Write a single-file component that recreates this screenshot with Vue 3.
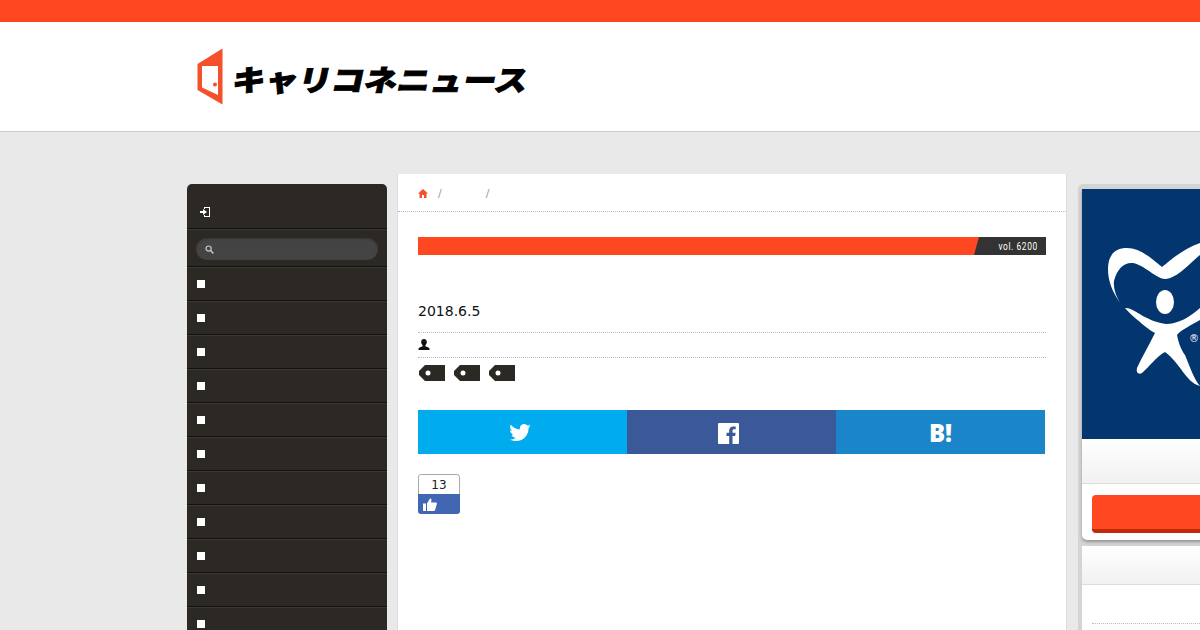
<template>
  <div class="page">
    <div class="top-bar"></div>

    <header class="site-header">
      <div class="logo">
        <svg class="logo-door" width="26" height="58" viewBox="0 0 26 58">
          <polygon points="25.5,0.5 25.5,56.5 0.5,42 0.5,16" fill="#f4512a" />
          <polygon points="5,18 21,18 21,47 5,39.5" fill="#fff" />
          <circle cx="18" cy="36.5" r="2" fill="#f4512a" />
        </svg>
        <span class="logo-text">キャリコネニュース</span>
      </div>
    </header>

    <div class="columns">
      <aside class="side-nav">
        <div class="nav-login">
          <svg width="11" height="12" viewBox="0 0 11 12">
            <path d="M4 1h6v10H4V9h1v1h4V2H5v1H4z" fill="#fff" />
            <path d="M0 5h3V3l4 3-4 3V7H0z" fill="#fff" />
          </svg>
        </div>
        <div class="nav-search">
          <div class="search-pill">
            <svg width="9" height="9" viewBox="0 0 9 9">
              <circle cx="3.6" cy="3.6" r="2.6" fill="none" stroke="#ccc" stroke-width="1.2" />
              <path d="M5.6 5.6L8.4 8.4" stroke="#ccc" stroke-width="1.4" />
            </svg>
          </div>
        </div>
        <div v-for="n in 11" :key="n" class="nav-item">
          <span class="nav-square"></span>
        </div>
      </aside>

      <main class="article">
        <div class="crumbs">
          <svg width="10" height="9" viewBox="0 0 10 9">
            <path d="M5 0l5 4.6H8.5V9H6V6H4v3H1.500V4.600H0z" fill="#f4512a" />
          </svg>
          <span class="crumb-sep first">/</span>
          <span class="crumb-sep second">/</span>
        </div>

        <div class="article-body">
          <div class="title-bar">
            <div class="vol"><span class="vol-text">vol. 6200</span></div>
          </div>

          <p class="date">2018.6.5</p>

          <div class="author">
            <svg width="12" height="12" viewBox="0 0 12 12">
              <path d="M6 0c1.800 0 2.800 1.300 2.800 3.100 0 1.300-.6 2.500-1.400 3.100v1c1.500.5 3.600 1.100 4.100 2.300v1.500H.5V9.500c.5-1.200 2.600-1.800 4.100-2.300v-1C3.800 5.600 3.200 4.400 3.200 3.100 3.200 1.300 4.200 0 6 0z" fill="#111" />
            </svg>
          </div>

          <div class="tags">
            <svg v-for="t in 3" :key="t" width="27" height="18" viewBox="0 0 27 18">
              <path d="M7 1h20v16H7L1 11V7z" fill="#2c2824" />
              <circle cx="10" cy="9" r="2.500" fill="#fff" />
            </svg>
          </div>

          <div class="share">
            <div class="share-btn twitter">
              <svg width="22" height="18" viewBox="0 0 24 20">
                <path d="M24 2.400c-.9.400-1.800.7-2.800.8 1-.6 1.800-1.600 2.200-2.700-1 .6-2 1-3.100 1.200C19.300.7 18 0 16.600 0c-2.700 0-4.900 2.200-4.900 4.900 0 .4 0 .8.100 1.100C7.700 5.800 4.100 3.900 1.700.9c-.4.700-.7 1.600-.7 2.500 0 1.700.9 3.200 2.200 4.100-.8 0-1.600-.2-2.200-.6v.1c0 2.400 1.700 4.400 3.900 4.800-.4.100-.8.200-1.300.2-.3 0-.6 0-.9-.1.600 2 2.400 3.400 4.600 3.400-1.700 1.300-3.800 2.100-6.100 2.100-.4 0-.8 0-1.200-.1C2.200 18.300 4.800 19 7.500 19c9.100 0 14-7.500 14-14v-.6c1-.7 1.800-1.600 2.500-2z" fill="#fff" />
              </svg>
            </div>
            <div class="share-btn facebook">
              <svg width="21" height="21" viewBox="0 0 21 21">
                <path d="M1 0h19a1 1 0 0 1 1 1v19a1 1 0 0 1-1 1h-5.500v-8h2.700l.4-3.200h-3.100v-2c0-.9.300-1.500 1.600-1.500h1.600V3.500c-.3 0-1.300-.1-2.400-.1-2.400 0-4.100 1.500-4.100 4.200v2.200H8.500V13h2.700v8H1a1 1 0 0 1-1-1V1a1 1 0 0 1 1-1z" fill="#fff" />
              </svg>
            </div>
            <div class="share-btn hatena">B!</div>
          </div>

          <div class="like">
            <div class="like-count">13</div>
            <div class="like-thumb">
              <svg width="14" height="13" viewBox="0 0 14 13">
                <path d="M0 5.500h3V13H0zM4 5.500L7 .5c1.200 0 1.800 1 1.400 2.300L8 4.500h4.800c.9 0 1.300.8 1 1.500l-1.700 6c-.2.600-.6 1-1.200 1H4z" fill="#fff" />
              </svg>
            </div>
          </div>
        </div>
      </main>

      <aside class="right-col">
        <section class="promo-card">
          <svg class="promo-art" width="300" height="250" viewBox="0 0 300 250">
            <rect width="300" height="250" fill="#03356f" />
            <path d="M38 114C30 102 26 92 26 80C26 66 33 59 45 59C56 59 66 66 80 78C88 72 100 60 118 54L118 66C110 72 95 90 83 90C75 90 62 76 51 74C42 73 35 80 32 92C31 99 34 107 38 114z" fill="#fff" />
            <ellipse cx="83" cy="113" rx="9" ry="12" fill="#fff" />
            <path d="M43 119C52 118 60 131 84 135C96 135 108 128 118 119L118 131C110 136 100 140 95 146C97 156 100 162 103 166C108 178 112 190 118 197C110 195 105 188 101 183C96 176 90 168 83 163C74 168 67 178 60 184C56 186 54 183 55 179C60 168 67 156 73 144C66 140 60 135 58 133C52 128 47 124 43 119z" fill="#fff" />
            <text x="112" y="153" text-anchor="middle" class="reg-mark">®</text>
          </svg>
          <div class="promo-head"></div>
          <div class="promo-action">
            <div class="promo-btn"></div>
          </div>
        </section>

        <section class="list-card">
          <div class="list-head"></div>
          <div class="list-row"></div>
        </section>
      </aside>
    </div>
  </div>
</template>

<script setup>
</script>

<style>
html,
body {
  margin: 0;
  height: 630px;
  overflow: hidden;
  background: #e9e9e9;
}
</style>

<style scoped>
.page {
  width: 1200px;
  height: 630px;
  overflow: hidden;
  font-family: "DejaVu Sans", sans-serif;
  color: #111;
}

.top-bar {
  height: 22px;
  background: #ff4722;
}

/* Header */
.site-header {
  height: 109px;
  background: #fff;
  border-bottom: 1px solid #ccc;
  padding-left: 197px;
  display: flex;
  align-items: center;
}

.logo {
  display: flex;
  align-items: center;
  gap: 10px;
  margin-top: 1px;
}

.logo-text {
  display: block;
  width: 295px;
  font-family: "Noto Sans CJK JP", sans-serif;
  font-weight: 900;
  font-size: 33px;
  line-height: 40px;
  white-space: nowrap;
  color: #000;
  -webkit-text-stroke: 1px #000;
  transform: skewX(-12deg) scaleY(0.88);
  margin-top: 4px;
}

/* Columns */
.columns {
  display: flex;
  align-items: flex-start;
  padding: 42px 0 0 187px;
  width: 1400px;
  box-sizing: border-box;
}

/* Left nav */
.side-nav {
  width: 200px;
  margin-top: 10px;
  margin-right: 10px;
  flex-shrink: 0;
  background: #2c2824;
  border-radius: 5px 5px 0 0;
}

.nav-login {
  height: 45px;
  padding: 11px 0 0 13px;
  box-sizing: border-box;
  display: flex;
  align-items: center;
  border-bottom: 1px solid #111;
  box-shadow: 0 1px 0 #3d3833;
}

.nav-search {
  height: 38px;
  box-sizing: border-box;
  padding: 9px 9px 0;
  border-bottom: 1px solid #111;
  box-shadow: 0 1px 0 #3d3833;
}

.search-pill {
  height: 22px;
  border-radius: 11px;
  background: #444;
  box-shadow: inset 0 1px 2px #333;
  display: flex;
  align-items: center;
  padding-left: 9px;
}

.nav-item {
  height: 34px;
  box-sizing: border-box;
  padding-left: 10px;
  display: flex;
  align-items: center;
  border-bottom: 1px solid #111;
  box-shadow: 0 1px 0 #3d3833;
}

.nav-square {
  width: 8px;
  height: 8px;
  background: #fff;
}

/* Article */
.article {
  width: 670px;
  height: 460px;
  flex-shrink: 0;
  background: #fff;
  border-left: 1px solid #ddd;
  border-right: 1px solid #ddd;
  box-sizing: border-box;
}

.crumbs {
  height: 38px;
  box-sizing: border-box;
  border-bottom: 1px dotted #bbb;
  padding: 2px 0 0 20px;
  display: flex;
  align-items: center;
  font-size: 11px;
  color: #999;
}

.crumb-sep.first {
  margin-left: 10px;
}

.crumb-sep.second {
  margin-left: 44px;
}

.article-body {
  padding: 25px 20px 0;
}

.title-bar {
  height: 18px;
  background: #ff4722;
  display: flex;
  justify-content: flex-end;
}

.vol {
  width: 72px;
  height: 18px;
  background: #333;
  clip-path: polygon(5px 0, 100% 0, 100% 100%, 0 100%);
  display: flex;
  align-items: center;
  justify-content: flex-end;
  padding-right: 8px;
  box-sizing: border-box;
}

.vol-text {
  font-family: "Roboto", sans-serif;
  font-size: 11px;
  letter-spacing: 0.8px;
  color: #fff;
  transform: scaleX(0.76);
  transform-origin: right center;
}

.date {
  margin: 47px 0 0;
  font-size: 14px;
  line-height: 18px;
  height: 30px;
  border-bottom: 1px dotted #bbb;
}

.author {
  height: 25px;
  box-sizing: border-box;
  border-bottom: 1px dotted #bbb;
  padding-top: 6px;
  display: flex;
}

.tags {
  display: flex;
  gap: 8px;
  padding-top: 6px;
}

.share {
  display: flex;
  margin-top: 28px;
}

.share-btn {
  width: 209px;
  height: 44px;
  display: flex;
  align-items: center;
  justify-content: center;
  box-sizing: border-box;
}

.twitter {
  background: #00acee;
  padding: 2px 5px 0 0;
}

.facebook {
  background: #3b5998;
  padding: 2px 6px 0 0;
}

.hatena {
  background: #1a85c9;
  color: #fff;
  font-family: "Open Sans", sans-serif;
  font-size: 24px;
  font-weight: 800;
}

.like {
  width: 42px;
  margin-top: 20px;
  border-radius: 3px;
  overflow: hidden;
}

.like-count {
  height: 20px;
  box-sizing: border-box;
  border: 1px solid #aaa;
  border-bottom: none;
  border-radius: 3px 3px 0 0;
  text-align: center;
  font-size: 12px;
  line-height: 21px;
  color: #222;
}

.like-thumb {
  height: 20px;
  background: #4267b2;
  padding: 2px 0 0 5px;
  box-sizing: border-box;
}

/* Right column */
.right-col {
  width: 304px;
  height: 446px;
  margin: 10px 0 0 11px;
  padding: 5px 0 0 4px;
  box-sizing: border-box;
  flex-shrink: 0;
  background: #d4d4d4;
  border-radius: 5px 0 0 0;
}

.promo-card {
  border-radius: 0 0 0 5px;
  background: #fff;
  box-shadow: 0 2px 3px rgba(0, 0, 0, 0.3);
}

.promo-art {
  display: block;
}

.promo-head {
  height: 44px;
  background: linear-gradient(#fff, #f1f1f1);
  border-bottom: 1px solid #ddd;
}

.promo-action {
  height: 56px;
  padding: 11px 0 0 10px;
  box-sizing: border-box;
}

.promo-btn {
  height: 38px;
  background: #ff4722;
  border-bottom: 4px solid #bf2a0a;
  border-radius: 4px;
  box-sizing: border-box;
}

.list-card {
  margin-top: 6px;
  background: #fff;
  height: 200px;
}

.list-head {
  height: 38px;
  background: linear-gradient(#fff, #f1f1f1);
  border-bottom: 1px solid #ddd;
}

.list-row {
  height: 38px;
  margin-left: 10px;
  border-bottom: 1px dotted #bbb;
}

.reg-mark {
  font-family: "DejaVu Sans", sans-serif;
  font-size: 10px;
  fill: #fff;
}
</style>
